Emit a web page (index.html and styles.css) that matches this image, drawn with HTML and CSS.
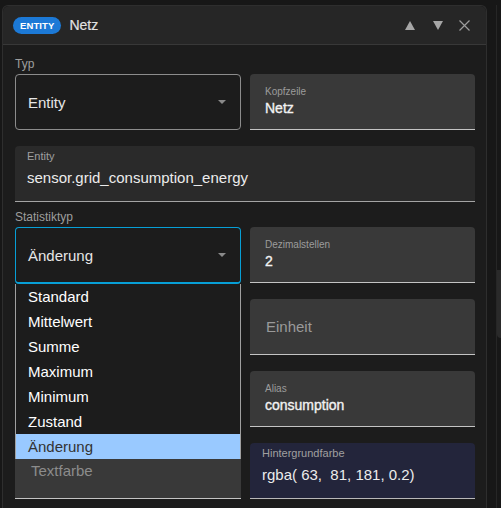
FILE: index.html
```html
<!DOCTYPE html>
<html lang="de">
<head>
<meta charset="utf-8">
<title>Entity Netz</title>
<link rel="stylesheet" href="styles.css">
</head>
<body>
<div class="page">
  <div class="card">
    <div class="card-header">
      <span class="badge">ENTITY</span>
      <span class="title">Netz</span>
      <div class="actions">
        <svg class="ico up" width="10" height="9" viewBox="0 0 10 9"><path d="M5 0 L10 9 L0 9 Z" fill="#a6a6a6"/></svg>
        <svg class="ico down" width="10" height="9" viewBox="0 0 10 9"><path d="M0 0 L10 0 L5 9 Z" fill="#a6a6a6"/></svg>
        <svg class="ico close" width="11" height="11" viewBox="0 0 11 11"><path d="M0.5 0.5 L10.5 10.5 M10.5 0.5 L0.5 10.5" stroke="#9c9c9c" stroke-width="1.2" fill="none"/></svg>
      </div>
    </div>
    <div class="card-body">
      <div class="label">Typ</div>
      <div class="grid">
        <div class="select"><span class="sel-value">Entity</span><span class="arrow"></span></div>
        <div class="field filled">
          <span class="flabel">Kopfzeile</span>
          <span class="fvalue">Netz</span>
        </div>
      </div>
      <div class="field wide">
        <span class="wlabel">Entity</span>
        <span class="wvalue">sensor.grid_consumption_energy</span>
      </div>
      <div class="label second">Statistiktyp</div>
      <div class="grid rows">
        <div class="select-wrap">
          <div class="select focused"><span class="sel-value">Änderung</span><span class="arrow"></span></div>
          <ul class="popup">
            <li>Standard</li>
            <li>Mittelwert</li>
            <li>Summe</li>
            <li>Maximum</li>
            <li>Minimum</li>
            <li>Zustand</li>
            <li class="active">Änderung</li>
          </ul>
        </div>
        <div class="field filled">
          <span class="flabel">Dezimalstellen</span>
          <span class="fvalue">2</span>
        </div>
        <div class="field filled"></div>
        <div class="field filled placeholder"><span>Einheit</span></div>
        <div class="field filled"></div>
        <div class="field filled">
          <span class="flabel">Alias</span>
          <span class="fvalue">consumption</span>
        </div>
        <div class="field filled placeholder dim"><span>Textfarbe</span></div>
        <div class="field color">
          <span class="wlabel">Hintergrundfarbe</span>
          <span class="wvalue">rgba( 63,&nbsp; 81, 181, 0.2)</span>
        </div>
      </div>
    </div>
  </div>
  <div class="side"><div class="thumb"></div></div>
</div>
</body>
</html>
```
FILE: styles.css
```css
html, body {
  margin: 0;
  padding: 0;
  background: #171717;
  height: 508px;
  overflow: hidden;
  font-family: "Liberation Sans", Arial, sans-serif;
}

.page {
  display: flex;
  padding: 5px 0 0 2px;
  height: 503px;
}

.card {
  width: 485px;
  flex: none;
  box-sizing: border-box;
  border: 1px solid #2e2e2e;
  border-bottom: none;
  border-radius: 6px 6px 0 0;
  background: #1c1c1c;
}

.card-header {
  height: 38px;
  display: flex;
  align-items: center;
  padding: 0 16px 0 10px;
  background: #262626;
  border-bottom: 1px solid #383838;
  border-radius: 6px 6px 0 0;
}

.badge {
  height: 17px;
  line-height: 17px;
  padding: 0 7px;
  border-radius: 9px;
  background: #1c79d6;
  color: #fff;
  font-weight: bold;
  font-size: 9.5px;
  letter-spacing: 0.1px;
}

.title {
  margin-left: 8px;
  color: #e2e2e2;
  font-size: 14px;
  -webkit-text-stroke: 0.2px #e2e2e2;
}

.actions {
  margin-left: auto;
  display: flex;
  align-items: center;
}

.ico { display: block; }
.ico.up { margin-right: 18px; }
.ico.down { margin-right: 16px; }

.card-body {
  padding: 11px 11px 0 12px;
}

.label {
  font-size: 12px;
  line-height: 16px;
  color: #9e9e9e;
  margin-bottom: 2px;
}

.label.second { margin-top: 7px; }

.grid {
  display: grid;
  grid-template-columns: 226px 225px;
  column-gap: 9px;
  row-gap: 16px;
}

.select {
  height: 56px;
  box-sizing: border-box;
  border: 1px solid #8c8c8c;
  border-radius: 4px;
  padding: 0 14px 0 12px;
  display: flex;
  align-items: center;
  color: #e6e6e6;
  font-size: 15px;
}

.select.focused {
  border-color: #079fd6;
  border-bottom-width: 2px;
  height: 57px;
  margin-bottom: -1px;
}

.sel-value { flex: 1; }

.arrow {
  width: 0;
  height: 0;
  border-left: 4px solid transparent;
  border-right: 4px solid transparent;
  border-top: 4px solid #8a8a8a;
}

.select-wrap {
  position: relative;
}

.popup {
  position: absolute;
  z-index: 2;
  top: 57px;
  left: 0;
  width: 226px;
  box-sizing: border-box;
  margin: 0;
  padding: 0;
  list-style: none;
  background: #1c1c1c;
  border-left: 1px solid #a0a0a0;
  border-right: 1px solid #a0a0a0;
}

.popup li {
  height: 25px;
  line-height: 25px;
  padding-left: 12px;
  font-size: 15px;
  color: #ffffff;
}

.popup li.active {
  background: #99c9ff;
  color: #333333;
}

.field {
  height: 56px;
  box-sizing: border-box;
  border-radius: 4px 4px 0 0;
  display: flex;
  flex-direction: column;
}

.field.filled {
  background: #393939;
  border-bottom: 1px solid #c4c4c4;
  padding: 11px 15px 0;
}

.flabel {
  font-size: 10px;
  line-height: 13px;
  color: #9c9c9c;
}

.fvalue {
  margin-top: 1px;
  font-size: 14px;
  line-height: 18px;
  color: #f2f2f2;
  -webkit-text-stroke: 0.35px #f2f2f2;
}

.field.placeholder {
  padding-top: 0;
  justify-content: center;
  padding-left: 16px;
  font-size: 15px;
  color: #9a9a9a;
}

.field.placeholder.dim { color: #8c8c8c; }

.field.wide {
  margin-top: 16px;
  background: #2a2a2a;
  border-bottom: 1px solid #a4a4a4;
  padding: 4px 12px 0;
}

.field.color {
  background: #23253b;
  border-bottom: 1px solid #b8b8b8;
  padding: 4px 12px 0;
}

.wlabel {
  font-size: 11px;
  line-height: 13px;
  color: #a0a0a0;
}

.wvalue {
  margin-top: 6px;
  font-size: 15px;
  line-height: 18px;
  color: #ececec;
}

.side {
  flex: 1;
  margin-left: 9px;
  border-left: 1px solid #262626;
  display: flex;
  flex-direction: column;
}

.thumb {
  margin-top: 265px;
  height: 68px;
  background: #2a2a2a;
  border-radius: 0 0 0 4px;
}
```
